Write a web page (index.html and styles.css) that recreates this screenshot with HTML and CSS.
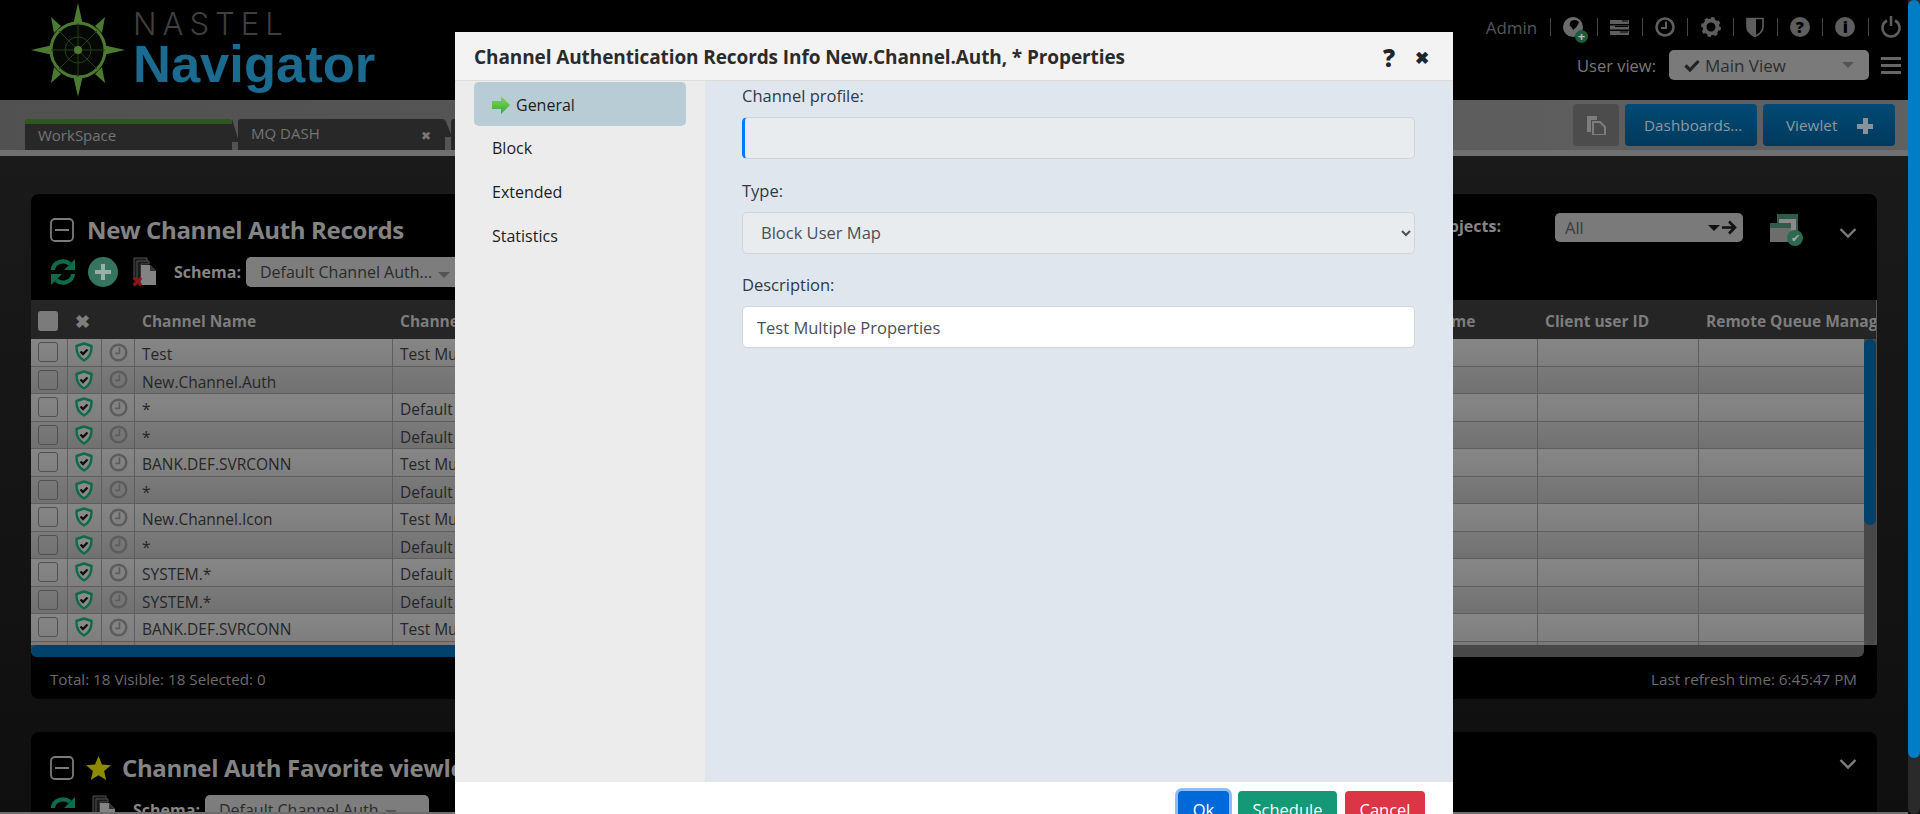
FILE: index.html
```html
<!DOCTYPE html>
<html>
    <head>
        <title>Nastel Navigator</title>
        <link rel="stylesheet" href="styles.css">
    </head>
    <body>
        <svg class="defs" width="0" height="0">
            <symbol id="shield" viewBox="0 0 18 20">
                <path d="M9 1.500 16.500 4c.3 7-1.700 11.500-7.500 14.500C3.200 15.500 1.200 11 1.500 4z" fill="#8a8a8a" stroke="#0d6b47" stroke-width="2.400" stroke-linejoin="round"/>
                <path d="M5.500 9.500 8 12l4.500-4.500" fill="none" stroke="#111" stroke-width="2.400"/>
            </symbol>
            <symbol id="clock" viewBox="0 0 20 20">
                <circle cx="10" cy="10" r="8.200" fill="none" stroke="#5c5c5c" stroke-width="2.600"/>
                <path d="M11 4.500V11H6.500" fill="none" stroke="#5c5c5c" stroke-width="1.800"/>
            </symbol>
            <symbol id="minus-box" viewBox="0 0 24 24">
                <rect x="1" y="1" width="22" height="22" rx="4" fill="none" stroke="#7b7b7b" stroke-width="1.800"/>
                <path d="M5 12h14" stroke="#7b7b7b" stroke-width="2"/>
            </symbol>
            <symbol id="refresh" viewBox="0 0 26 28">
                <path d="M3 12a10 9 0 0 1 17-6" fill="none" stroke="#0f6b4a" stroke-width="4.200"/>
                <path d="M25 1v11H14z" fill="#0f6b4a"/>
                <path d="M23 16a10 9 0 0 1-17 6" fill="none" stroke="#0f6b4a" stroke-width="4.200"/>
                <path d="M1 27V16h11z" fill="#0f6b4a"/>
            </symbol>
            <symbol id="docs" viewBox="0 0 24 30">
                <path d="M1 1h13v4H5v18H1z" fill="#1a1a1a" stroke="#4e4e4e"/>
                <path d="M4 4h12v3H8v18H4z" fill="#1a1a1a" stroke="#4e4e4e"/>
                <path d="M8 8h9l6 6v14H8z" fill="#838383"/>
                <path d="M17 8v6h6z" fill="#333"/>
            </symbol>
            <symbol id="chevron" viewBox="0 0 18 12">
                <path d="M1.500 2 9 9.500 16.500 2" fill="none" stroke="#7d7d7d" stroke-width="2.400"/>
            </symbol>
        </svg>

        <div class="page">
            <header class="topbar">
                <div class="logo">
                    <svg class="compass" width="94" height="94" viewBox="0 0 94 94">
                        <g fill="#4c7a31">
                            <path d="M47 0 52 22H42zM47 94 42 72H52zM0 47 22 42V52zM94 47 72 52V42z"/>
                            <path d="M20 14 30 23 23 30zM74 14 71 30 64 23zM20 80 23 64 30 71zM74 80 64 71 71 64z"/>
                        </g>
                        <circle cx="47" cy="47" r="27" fill="#050805" stroke="#4c7a31" stroke-width="3"/>
                        <circle cx="47" cy="47" r="13" fill="none" stroke="#264017"/>
                        <path d="M47 20V74M20 47H74M28 28 66 66M66 28 28 66" stroke="#264017"/>
                        <circle cx="47" cy="47" r="4" fill="#4c7a31"/>
                    </svg>
                    <div class="logo-text">
                        <div class="logo-nastel">NASTEL</div>
                        <div class="logo-nav">Navigator</div>
                    </div>
                </div>
                <div class="top-right">
                    <div class="top-icons">
                        <span class="admin">Admin</span>
                        <span class="sep"></span>
                        <span class="globe">
                            <svg width="20" height="20" viewBox="0 0 20 20"><circle cx="10" cy="10" r="10" fill="#6c6c6c"/><path d="M8 4c3-2 6-1 8 1-1 3-3 6-6 8-1-2-1-3-3-4-1-2 0-3 1-5z" fill="#000"/></svg>
                            <span class="globe-plus">+</span>
                        </span>
                        <span class="sep"></span>
                        <svg width="19" height="15" viewBox="0 0 19 15"><path d="M0 0h19v4H0zM0 5.500h19v4H0zM0 11h19v4H0z" fill="#5e5e5e"/><path d="M12 1h6M5 6.500h13M10 12h8" stroke="#000"/></svg>
                        <span class="sep"></span>
                        <svg width="20" height="20" viewBox="0 0 20 20"><circle cx="10" cy="10" r="8.500" fill="none" stroke="#5e5e5e" stroke-width="2.600"/><path d="M11 4.500V11H6" fill="none" stroke="#5e5e5e" stroke-width="2"/></svg>
                        <span class="sep"></span>
                        <svg width="20" height="20" viewBox="0 0 20 20"><circle cx="10" cy="10" r="6.500" fill="none" stroke="#5e5e5e" stroke-width="4"/><circle cx="10" cy="10" r="8.500" fill="none" stroke="#5e5e5e" stroke-width="3" stroke-dasharray="3.300 3.370"/></svg>
                        <span class="sep"></span>
                        <svg width="18" height="20" viewBox="0 0 18 20"><path d="M1 1.500h16V10c0 4-4 7.500-8 9.500C5 17.500 1 14 1 10z" fill="#000" stroke="#5e5e5e" stroke-width="1.600"/><path d="M1 1.500h9V19C5 17.500 1 14 1 10z" fill="#5e5e5e"/></svg>
                        <span class="sep"></span>
                        <span class="round-icon">?</span>
                        <span class="sep"></span>
                        <span class="round-icon">i</span>
                        <span class="sep"></span>
                        <svg width="20" height="22" viewBox="0 0 20 22"><path d="M6 4.500a8.500 8.500 0 1 0 8 0" fill="none" stroke="#5e5e5e" stroke-width="2.600"/><path d="M10 0v10" stroke="#5e5e5e" stroke-width="2.600"/></svg>
                    </div>
                    <div class="user-view">
                        <span class="user-label">User view:</span>
                        <div class="view-select">
                            <svg width="16" height="13" viewBox="0 0 16 13"><path d="M1.500 6.500 6 11 14.500 2" fill="none" stroke="#222" stroke-width="3.200"/></svg>
                            <span>Main View</span>
                            <i class="caret"></i>
                        </div>
                        <div class="burger"><b></b><b></b><b></b></div>
                    </div>
                </div>
            </header>

            <nav class="tabstrip">
                <div class="tab tab-active">WorkSpace</div>
                <div class="tab">MQ DASH <span class="tab-x">✖</span></div>
                <div class="tab"></div>
                <div class="tab-buttons">
                    <div class="btn-copy">
                        <svg width="20" height="20" viewBox="0 0 20 20"><path d="M1 1h10v4H5v12H1z" fill="#7d7d7d"/><path d="M7 7h7l5 5v8H7z" fill="none" stroke="#7d7d7d" stroke-width="2"/></svg>
                    </div>
                    <div class="btn-dark">Dashboards...</div>
                    <div class="btn-dark btn-viewlet">Viewlet <span class="btn-plus"></span></div>
                </div>
            </nav>

            <main class="content">
                <section class="panel">
                    <div class="panel-head">
                        <div>
                            <div class="panel-title">
                                <svg class="minus" width="24" height="24"><use href="#minus-box"/></svg>
                                <h2>New Channel Auth Records</h2>
                            </div>
                            <div class="toolbar">
                                <svg width="26" height="28"><use href="#refresh"/></svg>
                                <span class="add-circle"></span>
                                <span class="doc-del">
                                    <svg width="24" height="30"><use href="#docs"/></svg>
                                    <span class="del-x">✖</span>
                                </span>
                                <b class="schema-label">Schema:</b>
                                <div class="schema-select">Default Channel Auth... <i class="caret"></i></div>
                            </div>
                        </div>
                        <div class="panel-right">
                            <b class="objects-label">Filter objects:</b>
                            <div class="objects-select">All
                                <span class="objects-go">
                                    <i class="caret caret-dark"></i>
                                    <svg width="15" height="15" viewBox="0 0 15 15"><path d="M0 7.500h12M7 1.500l6 6-6 6" fill="none" stroke="#111" stroke-width="2.600"/></svg>
                                </span>
                            </div>
                            <span class="win-check">
                                <svg width="28" height="28" viewBox="0 0 28 28"><path d="M7 0h21v20H7z" fill="#2e5c48"/><path d="M9 5h17v13H9z" fill="#8a8a8a"/><path d="M0 9h21v20H0z" fill="#6d6d6d"/><path d="M0 9h21v5H0z" fill="#2e5c48"/></svg>
                                <span class="win-ok">✔</span>
                            </span>
                            <svg class="collapse" width="18" height="12"><use href="#chevron"/></svg>
                        </div>
                    </div>

                    <div class="grid">
                        <div class="grid-head">
                            <div class="c c1"><span class="head-box"></span></div>
                            <div class="c c2 head-x">✖</div>
                            <div class="c c3"></div>
                            <div class="c c4">Channel Name</div>
                            <div class="c c5">Channel Profile</div>
                            <div class="c c6">SSL Peer Name</div>
                            <div class="c c7">Client user ID</div>
                            <div class="c c8">Remote Queue Manager</div>
                        </div>
                        <div class="grid-body">
                            <div class="grid-rows">
                                <div class="row"><div class="c c1"><span class="box"></span></div><div class="c c2"><svg width="18" height="20"><use href="#shield"/></svg></div><div class="c c3"><svg width="19" height="19"><use href="#clock"/></svg></div><div class="c c4">Test</div><div class="c c5">Test Multiple Properties</div><div class="c c6"></div><div class="c c7"></div><div class="c c8"></div></div>
                                <div class="row"><div class="c c1"><span class="box"></span></div><div class="c c2"><svg width="18" height="20"><use href="#shield"/></svg></div><div class="c c3"><svg width="19" height="19"><use href="#clock"/></svg></div><div class="c c4">New.Channel.Auth</div><div class="c c5"></div><div class="c c6"></div><div class="c c7"></div><div class="c c8"></div></div>
                                <div class="row"><div class="c c1"><span class="box"></span></div><div class="c c2"><svg width="18" height="20"><use href="#shield"/></svg></div><div class="c c3"><svg width="19" height="19"><use href="#clock"/></svg></div><div class="c c4">*</div><div class="c c5">Default Channel Auth</div><div class="c c6"></div><div class="c c7"></div><div class="c c8"></div></div>
                                <div class="row"><div class="c c1"><span class="box"></span></div><div class="c c2"><svg width="18" height="20"><use href="#shield"/></svg></div><div class="c c3"><svg width="19" height="19"><use href="#clock"/></svg></div><div class="c c4">*</div><div class="c c5">Default Channel Auth</div><div class="c c6"></div><div class="c c7"></div><div class="c c8"></div></div>
                                <div class="row"><div class="c c1"><span class="box"></span></div><div class="c c2"><svg width="18" height="20"><use href="#shield"/></svg></div><div class="c c3"><svg width="19" height="19"><use href="#clock"/></svg></div><div class="c c4">BANK.DEF.SVRCONN</div><div class="c c5">Test Multiple Properties</div><div class="c c6"></div><div class="c c7"></div><div class="c c8"></div></div>
                                <div class="row"><div class="c c1"><span class="box"></span></div><div class="c c2"><svg width="18" height="20"><use href="#shield"/></svg></div><div class="c c3"><svg width="19" height="19"><use href="#clock"/></svg></div><div class="c c4">*</div><div class="c c5">Default Channel Auth</div><div class="c c6"></div><div class="c c7"></div><div class="c c8"></div></div>
                                <div class="row"><div class="c c1"><span class="box"></span></div><div class="c c2"><svg width="18" height="20"><use href="#shield"/></svg></div><div class="c c3"><svg width="19" height="19"><use href="#clock"/></svg></div><div class="c c4">New.Channel.Icon</div><div class="c c5">Test Multiple Properties</div><div class="c c6"></div><div class="c c7"></div><div class="c c8"></div></div>
                                <div class="row"><div class="c c1"><span class="box"></span></div><div class="c c2"><svg width="18" height="20"><use href="#shield"/></svg></div><div class="c c3"><svg width="19" height="19"><use href="#clock"/></svg></div><div class="c c4">*</div><div class="c c5">Default Channel Auth</div><div class="c c6"></div><div class="c c7"></div><div class="c c8"></div></div>
                                <div class="row"><div class="c c1"><span class="box"></span></div><div class="c c2"><svg width="18" height="20"><use href="#shield"/></svg></div><div class="c c3"><svg width="19" height="19"><use href="#clock"/></svg></div><div class="c c4">SYSTEM.*</div><div class="c c5">Default Channel Auth</div><div class="c c6"></div><div class="c c7"></div><div class="c c8"></div></div>
                                <div class="row"><div class="c c1"><span class="box"></span></div><div class="c c2"><svg width="18" height="20"><use href="#shield"/></svg></div><div class="c c3"><svg width="19" height="19"><use href="#clock"/></svg></div><div class="c c4">SYSTEM.*</div><div class="c c5">Default Channel Auth</div><div class="c c6"></div><div class="c c7"></div><div class="c c8"></div></div>
                                <div class="row"><div class="c c1"><span class="box"></span></div><div class="c c2"><svg width="18" height="20"><use href="#shield"/></svg></div><div class="c c3"><svg width="19" height="19"><use href="#clock"/></svg></div><div class="c c4">BANK.DEF.SVRCONN</div><div class="c c5">Test Multiple Properties</div><div class="c c6"></div><div class="c c7"></div><div class="c c8"></div></div>
                                <div class="row"><div class="c c1"></div><div class="c c2"></div><div class="c c3"></div><div class="c c4"></div><div class="c c5"></div><div class="c c6"></div><div class="c c7"></div><div class="c c8"></div></div>
                            </div>
                            <div class="v-track"><div class="v-thumb"></div></div>
                        </div>
                        <div class="h-track"><div class="h-thumb"></div></div>
                    </div>

                    <div class="panel-foot">
                        <span>Total: 18 Visible: 18 Selected: 0</span>
                        <span>Last refresh time: 6:45:47 PM</span>
                    </div>
                </section>

                <section class="panel">
                    <div class="panel-head">
                        <div>
                            <div class="panel-title">
                                <svg class="minus" width="24" height="24"><use href="#minus-box"/></svg>
                                <svg class="star" width="25" height="24" viewBox="0 0 25 24"><path d="M12.500 0 16 8.500l9 .7-6.900 5.900L20.200 24l-7.700-4.800L4.800 24l2.100-8.900L0 9.200l9-.7z" fill="#8c8a00"/></svg>
                                <h2>Channel Auth Favorite viewlets</h2>
                            </div>
                            <div class="toolbar">
                                <svg width="26" height="28"><use href="#refresh"/></svg>
                                <span class="doc-plain"><svg width="24" height="30"><use href="#docs"/></svg></span>
                                <b class="schema-label">Schema:</b>
                                <div class="schema-select schema-wide">Default Channel Auth <i class="caret"></i></div>
                            </div>
                        </div>
                        <div class="panel-right">
                            <svg class="collapse collapse-low" width="18" height="12"><use href="#chevron"/></svg>
                        </div>
                    </div>
                </section>
            </main>
            <div class="page-hbar"></div>
        </div>
        <div class="page-vbar"><div class="page-thumb"></div></div>

        <div class="modal">
            <div class="modal-head">
                <h1>Channel Authentication Records Info New.Channel.Auth, * Properties</h1>
                <span class="modal-actions"><span>?</span><span class="modal-x">✖</span></span>
            </div>
            <div class="modal-body">
                <aside class="side">
                    <div class="side-item side-active">
                        <svg width="18" height="18" viewBox="0 0 18 18">
                            <defs><linearGradient id="arrow" x1="0" y1="0" x2="0" y2="1"><stop offset="0" stop-color="#8ddb3e"/><stop offset="1" stop-color="#2fa84a"/></linearGradient></defs>
                            <path d="M0 5h9V0l9 9-9 9v-5H0z" fill="url(#arrow)"/>
                        </svg>
                        General
                    </div>
                    <div class="side-item">Block</div>
                    <div class="side-item">Extended</div>
                    <div class="side-item">Statistics</div>
                </aside>
                <form class="form">
                    <label class="form-label">Channel profile:</label>
                    <input class="field field-required" disabled>
                    <label class="form-label">Type:</label>
                    <select class="field field-select" disabled><option>Block User Map</option></select>
                    <label class="form-label">Description:</label>
                    <input class="field field-white" value="Test Multiple Properties">
                </form>
            </div>
            <div class="modal-foot">
                <div class="btn btn-ok">Ok</div>
                <div class="btn btn-schedule">Schedule</div>
                <div class="btn btn-cancel">Cancel</div>
            </div>
        </div>
    </body>
</html>
```

FILE: styles.css
```css
* {
    box-sizing: border-box;
}
html, body {
    margin: 0;
    height: 814px;
    overflow: hidden;
}
body {
    display: flex;
    background: #111;
    font-family: "Open Sans", sans-serif;
    font-size: 15.500px;
}
.defs {
    position: absolute;
}
.page {
    flex: 1;
    min-width: 0;
    height: 814px;
    display: flex;
    flex-direction: column;
    overflow: hidden;
}
.caret {
    display: inline-block;
    border-left: 6px solid transparent;
    border-right: 6px solid transparent;
    border-top: 6px solid #555;
}

/* top bar */
.topbar {
    height: 100px;
    flex: none;
    background: #000;
    display: flex;
    justify-content: space-between;
}
.logo {
    display: flex;
    padding: 3px 0 0 31px;
}
.compass {
    flex: none;
}
.logo-text {
    margin-left: 8px;
}
.logo-nastel {
    font-family: Inter, sans-serif;
    font-weight: 300;
    font-size: 31px;
    line-height: 26px;
    margin-top: 8px;
    letter-spacing: 6px;
    color: #3f3f3f;
}
.logo-nav {
    font-family: "Liberation Sans", sans-serif;
    font-weight: 700;
    font-size: 52.500px;
    line-height: 50px;
    margin-top: 2px;
    color: #1a6b8f;
}
.top-right {
    display: flex;
    flex-direction: column;
    align-items: flex-end;
    padding: 15px 7px 0 0;
}
.top-icons {
    display: flex;
    align-items: center;
    gap: 12.300px;
    height: 24px;
    color: #5e5e5e;
}
.admin {
    font-size: 17px;
    color: #565656;
}
.sep {
    width: 1px;
    height: 18px;
    background: #444;
}
.globe {
    position: relative;
    display: flex;
    margin-right: 2px;
}
.globe-plus {
    position: absolute;
    right: -5px;
    bottom: -6px;
    width: 13px;
    height: 13px;
    border-radius: 50%;
    background: #1e5b37;
    color: #bbb;
    font-size: 13px;
    font-weight: 700;
    line-height: 12px;
    text-align: center;
}
.round-icon {
    width: 20px;
    height: 20px;
    border-radius: 50%;
    background: #5e5e5e;
    color: #000;
    font-size: 16px;
    font-weight: 800;
    line-height: 20px;
    text-align: center;
}
.user-view {
    display: flex;
    align-items: center;
    margin-top: 11px;
}
.user-label {
    font-size: 16.500px;
    color: #787878;
    margin-right: 13px;
}
.view-select {
    width: 200px;
    height: 30px;
    background: #7a7a7a;
    border-radius: 5px;
    display: flex;
    align-items: center;
    padding: 0 15px;
    gap: 5px;
    font-size: 17px;
    color: #2c2c2c;
}
.view-select .caret {
    margin-left: auto;
}
.burger {
    margin-left: 12px;
    width: 20px;
}
.burger b {
    display: block;
    height: 3px;
    background: #666;
    margin: 4px 0;
}

/* tabs */
.tabstrip {
    height: 56px;
    flex: none;
    padding: 19px 13px 0 25px;
    background: linear-gradient(90deg, #515151, #606060);
    border-bottom: 6px solid #6f6f6f;
    display: flex;
    position: relative;
}
.tab {
    width: 207px;
    height: 31px;
    margin-right: 6px;
    background: #282828;
    color: #757575;
    font-size: 15px;
    line-height: 29px;
    padding-left: 13px;
    border-radius: 3px 3px 0 0;
    position: relative;
}
.tab::after {
    content: "";
    position: absolute;
    left: 100%;
    top: 0;
    width: 7px;
    height: 18px;
    background: #282828;
    clip-path: polygon(0 0, 100% 100%, 0 100%);
}
.tab-active {
    border-top: 5px solid #2e581d;
    line-height: 22px;
}
.tab-active::after {
    top: -5px;
    height: 23px;
}
.tab-x {
    position: absolute;
    right: 14px;
    top: 2px;
    font-size: 12px;
    color: #7a7a7a;
}
.tab-buttons {
    position: absolute;
    top: 4px;
    right: 13px;
    display: flex;
    gap: 6px;
}
.btn-copy {
    width: 46px;
    height: 42px;
    background: #4c4c4c;
    border-radius: 4px;
    display: flex;
    align-items: center;
    justify-content: center;
}
.btn-dark {
    width: 132px;
    height: 42px;
    background: linear-gradient(#014a75, #01395c);
    border-radius: 4px;
    color: #8a9aa5;
    font-size: 15.300px;
    line-height: 42px;
    padding-left: 19px;
    position: relative;
}
.btn-viewlet {
    padding-left: 23px;
}
.btn-plus {
    position: absolute;
    right: 22px;
    top: 14px;
    width: 16px;
    height: 16px;
    background: linear-gradient(#87929a, #87929a) center / 16px 5px no-repeat, linear-gradient(#87929a, #87929a) center / 5px 16px no-repeat;
}

/* panels */
.content {
    flex: 1;
    min-height: 0;
    padding: 38px 31px 0;
    background: linear-gradient(#1a1a1a, #0f0f0f);
    overflow: hidden;
}
.panel {
    background: #000;
    border-radius: 8px;
    margin-bottom: 33px;
}
.panel-head {
    height: 106px;
    padding: 24px 20px 0 19px;
    display: flex;
    justify-content: space-between;
}
.panel-title {
    display: flex;
    align-items: center;
    height: 24px;
}
.panel-title h2 {
    margin: 0 0 0 13px;
    font-size: 24px;
    line-height: 24px;
    font-weight: 700;
    letter-spacing: -0.350px;
    color: #848484;
}
.star {
    margin-left: 12px;
}
.star + h2 {
    margin-left: 11px;
}
.toolbar {
    display: flex;
    align-items: center;
    height: 30px;
    margin-top: 15px;
}
.add-circle {
    width: 30px;
    height: 30px;
    margin-left: 12px;
    border-radius: 50%;
    background: linear-gradient(#9ab0a7, #9ab0a7) center / 16px 4px no-repeat, linear-gradient(#9ab0a7, #9ab0a7) center / 4px 16px no-repeat, #35755f;
}
.doc-del {
    margin-left: 15px;
    position: relative;
    display: flex;
}
.doc-plain {
    margin-left: 16px;
    display: flex;
}
.del-x {
    position: absolute;
    left: -2px;
    bottom: -2px;
    color: #8c1414;
    font-size: 15px;
    line-height: 15px;
}
.schema-label {
    margin-left: 17px;
    font-size: 16px;
    color: #868686;
}
.schema-select {
    width: 214px;
    height: 30px;
    margin-left: 5px;
    padding-left: 14px;
    background: #7d7d7d;
    border-radius: 5px;
    color: #2a2a2a;
    font-size: 16px;
    line-height: 30px;
    white-space: nowrap;
}
.schema-select .caret {
    margin-left: 2px;
}
.schema-wide {
    width: 224px;
}
.panel-right {
    display: flex;
    align-items: flex-start;
}
.objects-label {
    font-size: 16px;
    color: #868686;
    margin-right: 54px;
    margin-top: -3px;
}
.objects-select {
    width: 188px;
    height: 29px;
    margin-top: -5px;
    padding-left: 10px;
    background: #7a7a7a;
    border-radius: 5px;
    color: #3c3c3c;
    font-size: 16.500px;
    line-height: 29px;
    position: relative;
}
.objects-go {
    position: absolute;
    right: 6px;
    top: 0;
    height: 29px;
    display: flex;
    align-items: center;
    gap: 2px;
}
.caret-dark {
    border-top-color: #111;
}
.win-check {
    margin-left: 27px;
    margin-top: -4px;
    position: relative;
    display: block;
    width: 31px;
    height: 30px;
}
.win-ok {
    position: absolute;
    right: -2px;
    bottom: -2px;
    width: 16px;
    height: 16px;
    border-radius: 50%;
    background: #2c6a50;
    color: #aaa;
    font-size: 11px;
    line-height: 16px;
    text-align: center;
}
.collapse {
    margin: 9px 0 0 38px;
}
.collapse-low {
    margin-top: 2px;
}

/* grid */
.grid {
    position: relative;
    height: 357px;
    overflow: hidden;
}
.grid-head {
    height: 39px;
    display: flex;
    background: #252525;
    color: #7d7d7d;
    font-weight: 700;
    border-right: 1px solid #555;
}
.grid-head .c {
    padding-top: 3px;
    border: 0;
}
.c {
    flex: none;
    height: 100%;
    display: flex;
    align-items: center;
    white-space: nowrap;
    overflow: hidden;
    border-right: 1px solid #5e5e5e;
}
.c1 { width: 37px; padding-left: 7px; }
.c2 { width: 34px; padding-left: 7px; }
.c3 { width: 33px; padding-left: 7px; }
.c4 { width: 258px; padding-left: 7px; }
.c5 { width: 960px; padding-left: 7px; }
.c6 { width: 185px; padding-left: 7px; }
.c7 { width: 161px; padding-left: 7px; }
.c8 { flex: 1; padding-left: 7px; border-right: 0; }
.row .c4, .row .c5 {
    padding-top: 4px;
}
.head-box {
    width: 20px;
    height: 20px;
    background: #7b7b7b;
    border-radius: 3px;
}
.head-x {
    font-size: 18px;
}
.grid-body {
    display: flex;
    height: 306px;
    background: #505050;
}
.grid-rows {
    flex: 1;
    min-width: 0;
    overflow: hidden;
}
.row {
    height: 27.500px;
    display: flex;
    background: linear-gradient(#868686, #7e7e7e);
    border-bottom: 1px solid #5e5e5e;
    color: #262626;
}
.row:nth-child(even) {
    background: linear-gradient(#7a7a7a, #717171);
}
.box {
    width: 20px;
    height: 20px;
    border: 1px solid #505050;
    border-radius: 3px;
}
.v-track {
    width: 12px;
    margin-right: 1px;
    flex: none;
    background: #484848;
    border-radius: 0 0 6px 6px;
}
.v-thumb {
    height: 186px;
    background: #01426c;
    border-radius: 6px;
}
.h-track {
    height: 12px;
    margin-right: 13px;
    background: #484848;
    border-radius: 0 0 6px 6px;
}
.h-thumb {
    width: 900px;
    height: 12px;
    background: #01426c;
    border-radius: 6px;
}
.panel-foot {
    height: 42px;
    padding: 2px 20px 0 19px;
    display: flex;
    align-items: center;
    justify-content: space-between;
    font-size: 15.200px;
    color: #6c6c6c;
}
.page-hbar {
    height: 2px;
    flex: none;
    background: #6e6e6e;
}
.page-vbar {
    width: 12px;
    flex: none;
    background: #2a2a2a;
    border-radius: 0 0 6px 6px;
}
.page-thumb {
    height: 758px;
    background: #007dc5;
    border-radius: 6px;
}

/* modal */
.modal {
    position: fixed;
    left: 455px;
    top: 32px;
    width: 998px;
    height: 782px;
    background: #fff;
    overflow: hidden;
    display: flex;
    flex-direction: column;
    color: #212529;
}
.modal-head {
    height: 49px;
    flex: none;
    padding: 2px 24px 0 19px;
    background: #f3f3f3;
    border-bottom: 1px solid #dcdcdc;
    display: flex;
    align-items: center;
    justify-content: space-between;
}
.modal-head h1 {
    margin: 0;
    font-size: 19px;
    font-weight: 700;
    letter-spacing: -0.100px;
    color: #2b2b2b;
}
.modal-actions {
    display: flex;
    align-items: center;
    gap: 20px;
    font-size: 24px;
    font-weight: 800;
}
.modal-x {
    font-size: 17px;
}
.modal-body {
    height: 701px;
    flex: none;
    display: flex;
}
.side {
    width: 250px;
    flex: none;
    padding: 1px 19px;
    background: #ececec;
    font-size: 16px;
}
.side-item {
    width: 212px;
    height: 44px;
    padding-left: 18px;
    display: flex;
    align-items: center;
    gap: 6px;
    color: #1d1d1d;
}
.side-active {
    background: #b8ccd6;
    border-radius: 5px;
    padding-top: 1px;
}
.form {
    flex: 1;
    background: #dfe6ee;
    padding: 0 38px 0 37px;
    font-size: 16.500px;
}
.form-label {
    display: block;
    height: 36px;
    padding-top: 3px;
    line-height: 24px;
    color: #303a44;
}
.field {
    display: block;
    width: 100%;
    height: 42px;
    margin-bottom: 16.500px;
    padding: 0 14px;
    border: 1px solid #ced4da;
    border-radius: 5px;
    background: #e9ecef;
    color: #495057;
    font: inherit;
}
.field-required {
    border-left: 3px solid #007bff;
}
.field-select {
    padding-left: 14px;
    opacity: 1;
}
.field-white {
    background: #fff;
}
.modal-foot {
    flex: 1;
    display: flex;
    justify-content: flex-end;
    gap: 8px;
    padding: 9px 28px 0 0;
}
.btn {
    height: 38px;
    border-radius: 4px;
    color: #fff;
    font-size: 16.500px;
    line-height: 38px;
    text-align: center;
}
.btn-ok {
    width: 51px;
    background: #0069d9;
    box-shadow: 0 0 0 3px #8cbdf8;
    margin-right: 1px;
}
.btn-schedule {
    width: 99px;
    background: #149876;
}
.btn-cancel {
    width: 80px;
    background: #dc3545;
}
```
